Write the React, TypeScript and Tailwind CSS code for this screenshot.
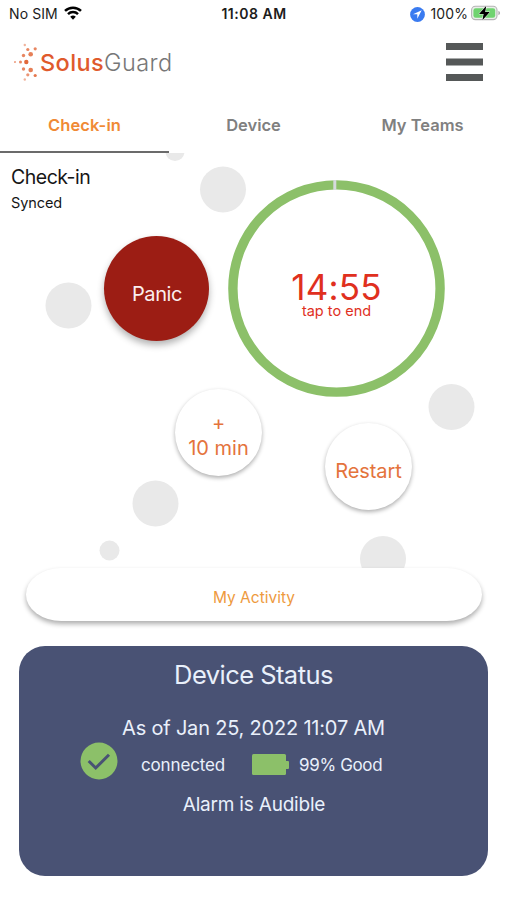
const tabs = [
  { label: 'Check-in', active: true },
  { label: 'Device', active: false },
  { label: 'My Teams', active: false },
];

const bubbles = [
  { x: 175, y: -1.5, r: 9.5 },
  { x: 223, y: 36.5, r: 23 },
  { x: 68.5, y: 152.5, r: 23 },
  { x: 451.5, y: 254, r: 23 },
  { x: 155.5, y: 350.5, r: 23 },
  { x: 109.5, y: 397.5, r: 10 },
  { x: 383, y: 406, r: 23 },
];

const logoDots = [
  { x: 10.8, y: 2, r: 1.2, o: 0.5 },
  { x: 13.8, y: 6.5, r: 1.6, o: 0.8 },
  { x: 21.2, y: 5.8, r: 1.6, o: 0.8 },
  { x: 9.5, y: 12.5, r: 1.7, o: 0.8 },
  { x: 16.7, y: 11.2, r: 2.3, o: 0.85 },
  { x: 1, y: 19, r: 1.1, o: 0.6 },
  { x: 6.5, y: 19, r: 1.5, o: 0.8 },
  { x: 12.3, y: 19, r: 2.2, o: 1 },
  { x: 9.5, y: 26, r: 1.7, o: 0.8 },
  { x: 16.7, y: 27, r: 2.3, o: 0.85 },
  { x: 13.8, y: 31.8, r: 1.6, o: 0.7 },
  { x: 21.2, y: 32.5, r: 1.6, o: 0.9 },
  { x: 10.8, y: 36.5, r: 1.2, o: 0.5 },
];

function StatusBar() {
  return (
    <div className="grid h-7 grid-cols-3 items-center pl-[9px] pr-1.5 text-sm text-[#1c1c1c]">
      <div className="flex items-center gap-1.5">
        <span className="tracking-[0.1px]">No SIM</span>
        <svg viewBox="0 0 18 14" className="-mt-0.5 h-3.5 w-[18px]" fill="none" stroke="#000" strokeWidth="2.5">
          <path d="M1 4.9a11.5 11.5 0 0 1 16 0" />
          <path d="M4 8.1a7.3 7.3 0 0 1 10 0" />
          <path d="M9 13.7 6.2 10.8a4 4 0 0 1 5.6 0z" fill="#000" stroke="none" />
        </svg>
      </div>
      <div className="pr-0.5 text-center font-semibold tracking-[0.5px]">11:08 AM</div>
      <div className="flex items-center justify-end">
        <svg viewBox="0 0 15 15" className="mr-[5px] size-[15px]">
          <circle cx="7.5" cy="7.5" r="7.4" fill="#3a7bf0" />
          <path d="M11.7 3.3 3 7.3h4.3v4.4z" fill="#fff" />
        </svg>
        <span className="mr-[3px] tracking-[0.1px]">100%</span>
        <svg viewBox="0 0 30 16" className="-mt-0.5 h-4 w-[30px]">
          <rect x=".6" y="1.2" width="25.4" height="13.4" rx="3.8" fill="#e9efe9" stroke="#b4b4b4" strokeWidth="1.1" />
          <rect x="2.4" y="3.2" width="21.8" height="9.6" rx="2.2" fill="#6fd36f" />
          <path d="M27.4 5.8v4.4q1.7-.8 1.7-2.2t-1.7-2.2z" fill="#a9a9a9" />
          <path d="M15.3.8 8 8.9h4.6l-1.2 6.3 7.4-8.1h-4.6z" fill="#000" stroke="#fff" strokeWidth="1" paintOrder="stroke" />
        </svg>
      </div>
    </div>
  );
}

function Header() {
  return (
    <header className="flex h-[70px] items-center justify-between pl-3.5 pr-6">
      <div className="flex items-center">
        <svg viewBox="0 0 24 38" className="-mt-0.5 h-[38px] w-6" fill="#e2683a">
          {logoDots.map((d, i) => (
            <circle key={i} cx={d.x} cy={d.y} r={d.r} fillOpacity={d.o} />
          ))}
        </svg>
        <span className="ml-0.5 text-[23.5px] leading-none tracking-[0.4px]">
          <span className="font-medium text-[#e05a2c]">Solus</span>
          <span className="font-light text-[#777]">Guard</span>
        </span>
      </div>
      <svg viewBox="0 0 37 38" className="-mt-0.5 h-[38px] w-[37px]" fill="#555858" role="button">
        <rect width="37" height="7" />
        <rect y="15.5" width="37" height="7" />
        <rect y="31" width="37" height="7" />
      </svg>
    </header>
  );
}

function Tabs() {
  return (
    <nav className="grid h-[55px] grid-cols-3 text-[16.5px] font-semibold">
      {tabs.map((tab) => (
        <button
          key={tab.label}
          className={
            tab.active
              ? 'border-b-2 border-[#6b6b6b] pt-0.5 tracking-[0.1px] text-[#f08a35]'
              : 'border-b-2 border-transparent pt-0.5 text-[#808080]'
          }
        >
          {tab.label}
        </button>
      ))}
    </nav>
  );
}

function TimerRing() {
  return (
    <button className="grid size-[217px] place-items-center rounded-full text-[#e0301e]">
      <svg viewBox="0 0 217 217" className="col-start-1 row-start-1 size-[217px]">
        <circle cx="108.5" cy="108.5" r="103.6" fill="#fff" stroke="#8cc069" strokeWidth="9.4" />
        <path d="M106.8 0v10" stroke="#d6dade" strokeWidth="3" />
      </svg>
      <span className="col-start-1 row-start-1 flex flex-col items-center pt-3">
        <span className="text-[35px] leading-8 tracking-[0.2px]">14:55</span>
        <span className="text-[14.5px] leading-4">tap to end</span>
      </span>
    </button>
  );
}

function CheckIn() {
  return (
    <section className="relative h-[415px]">
      <svg viewBox="0 0 507 415" className="absolute inset-0 h-[415px] w-[507px]" fill="#e9e9e9">
        {bubbles.map((b, i) => (
          <circle key={i} cx={b.x} cy={b.y} r={b.r} />
        ))}
      </svg>
      <div className="relative flex h-full flex-col">
        <div className="flex">
          <div className="w-[104px] pl-[11px] pt-3">
            <h1 className="text-[19.5px] leading-6 tracking-[-0.5px] text-[#161616]">Check-in</h1>
            <p className="mt-1 text-[14.5px] leading-5 tracking-[-0.1px] text-[#161616]">Synced</p>
          </div>
          <button className="mt-[83px] size-[105px] rounded-full bg-[#9c1d14] pl-px pt-2.5 text-xl tracking-[-0.4px] text-[#fbeeee] shadow-[0_4px_7px_rgba(0,0,0,0.3)]">
            Panic
          </button>
          <div className="ml-[19px] mt-[27px]">
            <TimerRing />
          </div>
        </div>
        <div className="flex items-start gap-[63px] pl-[175px]">
          <button className="-mt-2 size-[87px] rounded-full bg-white pt-1.5 text-xl leading-[25px] text-[#e4733c] shadow-[0_2px_4px_rgba(0,0,0,0.32)]">
            +<br />10 min
          </button>
          <button className="mt-[26px] size-[87px] rounded-full bg-white pt-2 text-xl tracking-[-0.1px] text-[#e4733c] shadow-[0_2px_4px_rgba(0,0,0,0.32)]">
            Restart
          </button>
        </div>
      </div>
    </section>
  );
}

function DeviceStatus() {
  return (
    <section className="mx-[19px] mt-[25px] flex h-[230px] flex-col items-center rounded-[26px] bg-[#495274] text-[#e9f0fb]">
      <h2 className="mt-[11px] text-[25.5px] leading-9 tracking-[-0.55px]">Device Status</h2>
      <p className="mt-[21px] text-xl leading-7 tracking-[-0.2px]">As of Jan 25, 2022 11:07 AM</p>
      <div className="flex w-full items-center pl-[61px]">
        <svg viewBox="0 0 38 38" className="size-[38px]">
          <circle cx="19" cy="19" r="18.5" fill="#8cc069" />
          <path d="m8.7 19 7 7L29 12.7" fill="none" stroke="#495274" strokeWidth="3" />
        </svg>
        <div className="ml-[23px] mt-2.5 w-[86px] text-[17px] tracking-[-0.15px]">connected</div>
        <svg viewBox="0 0 37 21" className="ml-[25px] mt-1.5 h-[21px] w-[37px]" fill="#8cc069">
          <rect width="34" height="21" rx="1.5" />
          <rect x="33" y="7" width="4" height="8" rx="1" />
        </svg>
        <span className="ml-2.5 mt-2.5 text-[17px] tracking-[-0.35px]">99% Good</span>
      </div>
      <p className="mt-[11px] pl-px text-[19px] leading-7 tracking-[-0.2px]">Alarm is Audible</p>
    </section>
  );
}

export default function App() {
  return (
    <div className="h-[900px] w-[507px] overflow-hidden bg-white font-['Inter',sans-serif]">
      <StatusBar />
      <Header />
      <Tabs />
      <CheckIn />
      <button className="relative mx-[26px] block h-[53px] w-[456px] rounded-[36px/27px] bg-white pt-1.5 text-[15.5px] text-[#ee9a3e] shadow-[0_3px_5px_rgba(0,0,0,0.32)]">
        My Activity
      </button>
      <DeviceStatus />
    </div>
  );
}
